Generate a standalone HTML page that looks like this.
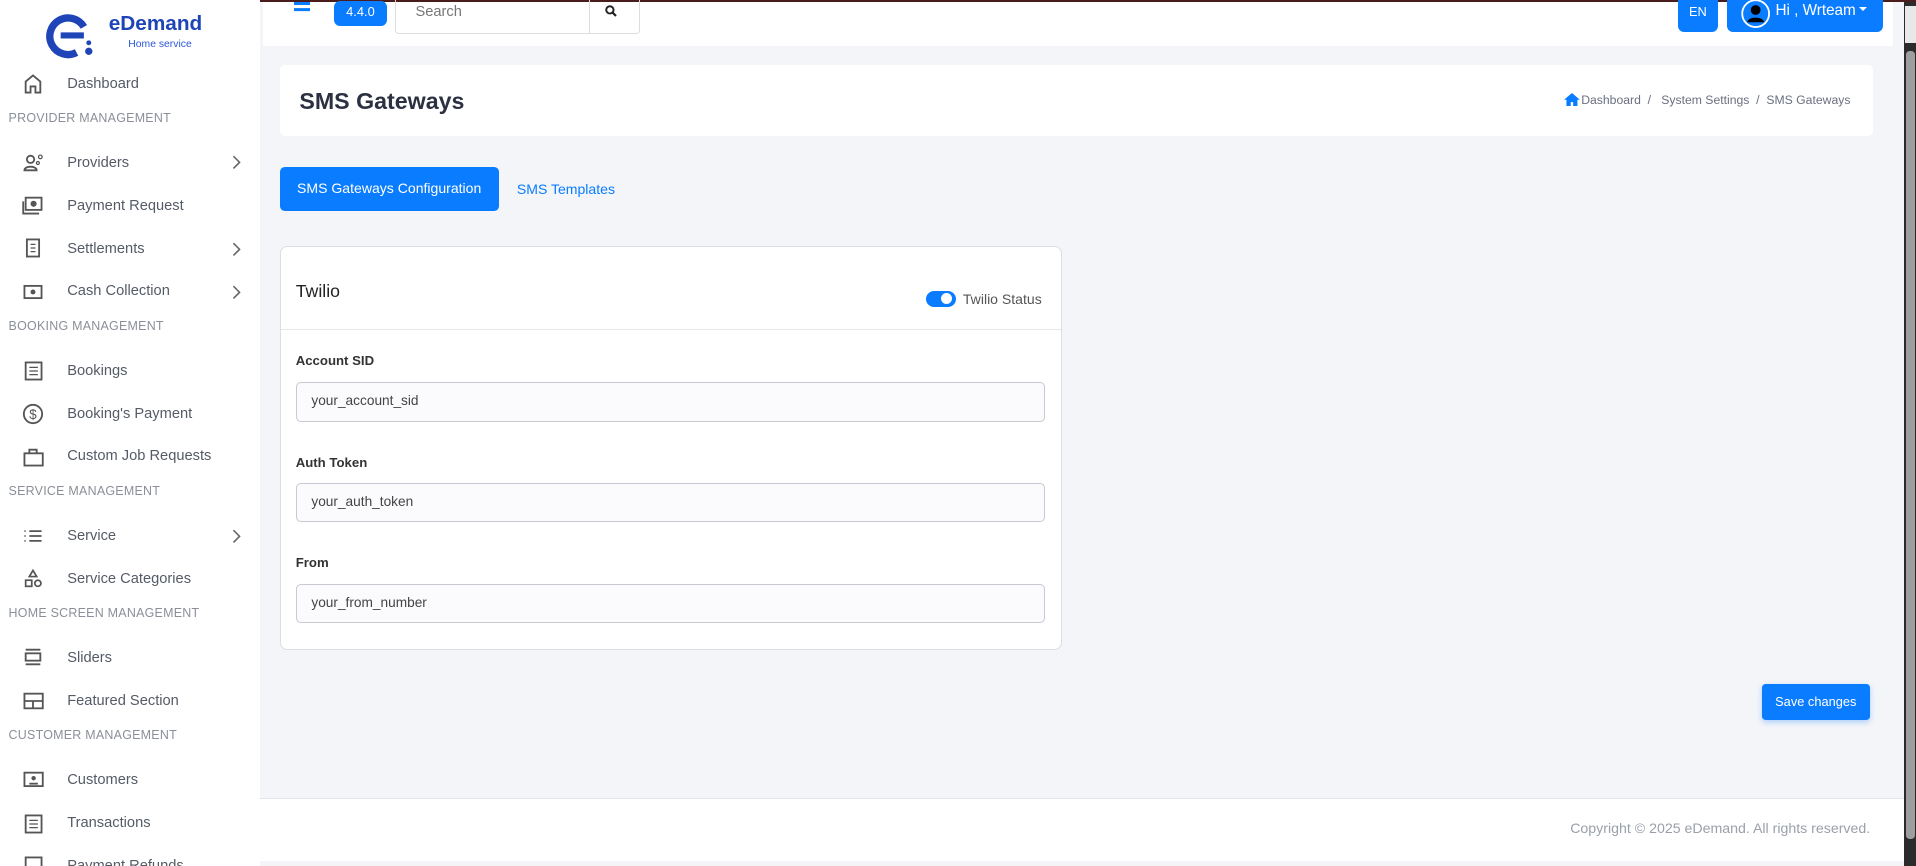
<!DOCTYPE html>
<html><head><meta charset="utf-8"><style>
html,body{margin:0;padding:0;width:1916px;height:866px;overflow:hidden;background:#f4f5f9}
#w{zoom:1.22194;width:1568px;height:709px;position:relative;font-family:"Liberation Sans",sans-serif;background:#f4f5f9;overflow:hidden}
.a{position:absolute}
.side{left:0;top:0;width:213px;height:709px;background:#fff}
.mi{position:absolute;left:55px;font-size:12px;color:#555b66}
.ic{position:absolute;left:18px;width:18px;height:18px}
.sec{position:absolute;left:7px;font-size:10.2px;color:#8a8f98;letter-spacing:.2px}
.chev{position:absolute;left:189px;width:8px;height:12px}
.lbl{position:absolute;left:242px;font-size:10.8px;color:#333;font-weight:bold}
.inp{position:absolute;left:242px;width:613px;height:32px;border:1px solid #c7cad1;border-radius:4px;background:#fbfbfe;font-size:11.2px;color:#444;box-sizing:border-box;padding:0 12px;line-height:30px}
</style></head><body><div id="w">
<div class="a" style="left:0;top:0;width:1568px;height:2px;background:#4a1c1c"></div>
<div class="a side"></div>
<!-- logo -->
<svg class="a" style="left:38px;top:9px" width="40" height="40" viewBox="0 0 40 40"><path d="M31 13 A15 15 0 1 0 25 34" fill="none" stroke="#1e44b8" stroke-width="6"/><path d="M12 20h19" stroke="#1e44b8" stroke-width="5"/><circle cx="35" cy="33" r="3" fill="#1e44b8"/><circle cx="35" cy="26" r="2" fill="#1e44b8"/></svg>
<div class="a" style="left:89px;top:10px;font-size:17px;font-weight:bold;color:#1e44b8">eDemand</div>
<div class="a" style="left:105px;top:32px;font-size:8.5px;color:#2a56d6">Home service</div>
<svg class="ic" style="top:60px" viewBox="0 0 18 18"><path d="M3 16V7l6-5 6 5v9h-4v-5H7v5z" fill="none" stroke="#555" stroke-width="1.5"/></svg>
<div class="mi" style="top:62px">Dashboard</div>
<div class="sec" style="top:91px">PROVIDER MANAGEMENT</div>
<svg class="ic" style="top:124px" viewBox="0 0 18 18"><circle cx="7" cy="6" r="3" fill="none" stroke="#555" stroke-width="1.5"/><path d="M2 15c0-4 10-4 10 0z" fill="none" stroke="#555" stroke-width="1.5"/><circle cx="15" cy="4" r="1.5" fill="none" stroke="#555"/><circle cx="13" cy="9" r="1.2" fill="none" stroke="#555"/></svg>
<div class="mi" style="top:127px">Providers</div>
<svg class="chev" style="top:127px" viewBox="0 0 8 12"><path d="M2 1l5 5-5 5" fill="none" stroke="#666" stroke-width="1.3"/></svg>
<svg class="ic" style="top:159px" viewBox="0 0 18 18"><rect x="3" y="3" width="13" height="10" fill="none" stroke="#555" stroke-width="1.5"/><circle cx="9.5" cy="8" r="2.5" fill="#555"/><path d="M1 6v10h13" fill="none" stroke="#555" stroke-width="1.5"/></svg>
<div class="mi" style="top:162px">Payment Request</div>
<svg class="ic" style="top:194px" viewBox="0 0 18 18"><rect x="4" y="2" width="10" height="14" fill="none" stroke="#555" stroke-width="1.5"/><path d="M7 6h4M7 9h4M7 12h4" stroke="#555"/></svg>
<div class="mi" style="top:197px">Settlements</div>
<svg class="chev" style="top:198px" viewBox="0 0 8 12"><path d="M2 1l5 5-5 5" fill="none" stroke="#666" stroke-width="1.3"/></svg>
<svg class="ic" style="top:230px" viewBox="0 0 18 18"><rect x="2" y="4" width="14" height="10" fill="none" stroke="#555" stroke-width="1.5"/><circle cx="9" cy="9" r="2" fill="#555"/></svg>
<div class="mi" style="top:232px">Cash Collection</div>
<svg class="chev" style="top:233px" viewBox="0 0 8 12"><path d="M2 1l5 5-5 5" fill="none" stroke="#666" stroke-width="1.3"/></svg>
<div class="sec" style="top:261px">BOOKING MANAGEMENT</div>
<svg class="ic" style="top:295px" viewBox="0 0 18 18"><rect x="3" y="2" width="13" height="14" fill="none" stroke="#555" stroke-width="1.5"/><path d="M6 6h7M6 9h7M6 12h7" stroke="#555"/></svg>
<div class="mi" style="top:297px">Bookings</div>
<svg class="ic" style="top:330px" viewBox="0 0 18 18"><circle cx="9" cy="9" r="7.5" fill="none" stroke="#555" stroke-width="1.5"/><text x="9" y="13" font-size="11" text-anchor="middle" fill="#555" font-family="Liberation Sans">$</text></svg>
<div class="mi" style="top:332px">Booking's Payment</div>
<svg class="ic" style="top:365px" viewBox="0 0 18 18"><rect x="2" y="6" width="15" height="10" fill="none" stroke="#555" stroke-width="1.5"/><path d="M6 6V3h6v3" fill="none" stroke="#555" stroke-width="1.5"/></svg>
<div class="mi" style="top:367px">Custom Job Requests</div>
<div class="sec" style="top:396px">SERVICE MANAGEMENT</div>
<svg class="ic" style="top:430px" viewBox="0 0 18 18"><path d="M2 5h1M6 5h10M2 9h1M6 9h10M2 13h1M6 13h10" stroke="#555" stroke-width="1.5"/></svg>
<div class="mi" style="top:432px">Service</div>
<svg class="chev" style="top:433px" viewBox="0 0 8 12"><path d="M2 1l5 5-5 5" fill="none" stroke="#666" stroke-width="1.3"/></svg>
<svg class="ic" style="top:465px" viewBox="0 0 18 18"><path d="M9 2l3 5H6z" fill="none" stroke="#555" stroke-width="1.4"/><rect x="3" y="10" width="5" height="5" fill="none" stroke="#555" stroke-width="1.4"/><circle cx="13" cy="12.5" r="2.5" fill="none" stroke="#555" stroke-width="1.4"/></svg>
<div class="mi" style="top:467px">Service Categories</div>
<div class="sec" style="top:496px">HOME SCREEN MANAGEMENT</div>
<svg class="ic" style="top:529px" viewBox="0 0 18 18"><path d="M3 3h12M3 15h12" stroke="#555" stroke-width="1.5"/><rect x="3" y="6" width="12" height="6" fill="none" stroke="#555" stroke-width="1.5"/></svg>
<div class="mi" style="top:532px">Sliders</div>
<svg class="ic" style="top:565px" viewBox="0 0 18 18"><rect x="2" y="3" width="15" height="12" fill="none" stroke="#555" stroke-width="1.5"/><path d="M2 9h15M9 9v6" stroke="#555" stroke-width="1.5"/></svg>
<div class="mi" style="top:567px">Featured Section</div>
<div class="sec" style="top:596px">CUSTOMER MANAGEMENT</div>
<svg class="ic" style="top:629px" viewBox="0 0 18 18"><rect x="2" y="3" width="15" height="11" fill="none" stroke="#555" stroke-width="1.5"/><circle cx="9.5" cy="7.5" r="1.8" fill="#555"/><path d="M6 12h7" stroke="#555" stroke-width="1.5"/></svg>
<div class="mi" style="top:632px">Customers</div>
<svg class="ic" style="top:665px" viewBox="0 0 18 18"><rect x="3" y="2" width="13" height="14" fill="none" stroke="#555" stroke-width="1.5"/><path d="M6 6h7M6 9h7M6 12h7" stroke="#555"/></svg>
<div class="mi" style="top:667px">Transactions</div>
<svg class="ic" style="top:700px" viewBox="0 0 18 18"><rect x="3" y="2" width="13" height="14" fill="none" stroke="#555" stroke-width="1.5"/></svg>
<div class="mi" style="top:702px">Payment Refunds</div>
<!-- topbar -->
<div class="a" style="left:215px;top:2px;width:1334px;height:36px;background:#fff"></div>
<div class="a" style="left:241px;top:2px;width:13px;height:2px;background:#0a7cff;box-shadow:0 5px 0 #0a7cff"></div>
<div class="a" style="left:273px;top:1px;width:44px;height:20px;background:#0a7cff;border-radius:5px;color:#fff;font-size:10.5px;text-align:center;line-height:18px">4.4.0</div>
<div class="a" style="left:323px;top:0;width:201px;height:28px;border:1px solid #ddd;border-top:none;border-radius:0 0 3px 3px;box-sizing:border-box"></div>
<div class="a" style="left:482px;top:0;width:1px;height:28px;background:#ddd"></div>
<div class="a" style="left:340px;top:3px;font-size:12px;color:#777">Search</div>
<svg class="a" style="left:495px;top:4px" width="10" height="10" viewBox="0 0 10 10"><circle cx="4" cy="4" r="3" fill="none" stroke="#222" stroke-width="1.6"/><path d="M6 6l3 3" stroke="#222" stroke-width="1.8"/></svg>
<div class="a" style="left:1373px;top:0;width:33px;height:26px;background:#0a7cff;border-radius:0 0 5px 5px;color:#fff;font-size:10.5px;text-align:center;line-height:20px">EN</div>
<div class="a" style="left:1413px;top:0;width:128px;height:26px;background:#0a7cff;border-radius:0 0 5px 5px"></div>
<svg class="a" style="left:1425px;top:-1px" width="24" height="24" viewBox="0 0 24 24"><circle cx="12" cy="12" r="11" fill="none" stroke="#fff" stroke-width="1.5"/><circle cx="12" cy="9" r="4" fill="#000"/><path d="M5 19c1-5 13-5 14 0z" fill="#000"/></svg>
<div class="a" style="left:1453px;top:2px;font-size:12.5px;color:#fff">Hi , Wrteam</div>
<div class="a" style="left:1521px;top:6px;width:0;height:0;border:4px solid transparent;border-top:4px solid #fff"></div>
<!-- header card -->
<div class="a" style="left:229px;top:53px;width:1304px;height:58px;background:#fff;border-radius:4px"></div>
<div class="a" style="left:245px;top:72px;font-size:19px;font-weight:bold;color:#2c3142">SMS Gateways</div>
<svg class="a" style="left:1280px;top:76px" width="13" height="11" viewBox="0 0 13 11"><path d="M6.5 0L0 5.5h2V11h3.5V7.5h2V11H11V5.5h2z" fill="#0a7cff"/></svg>
<div class="a" style="left:1294px;top:76px;font-size:10px;color:#6b7080">Dashboard &nbsp;/ &nbsp; System Settings &nbsp;/ &nbsp;SMS Gateways</div>
<!-- tabs -->
<div class="a" style="left:229px;top:137px;width:179px;height:36px;background:#0a7cff;border-radius:4px;color:#fff;font-size:11.5px;text-align:center;line-height:36px">SMS Gateways Configuration</div>
<div class="a" style="left:423px;top:148px;font-size:11.5px;color:#0a7cff">SMS Templates</div>
<!-- card -->
<div class="a" style="left:229px;top:201px;width:640px;height:331px;background:#fff;border:1px solid #dcdee3;border-radius:6px;box-sizing:border-box"></div>
<div class="a" style="left:230px;top:269px;width:638px;height:1px;background:#e5e7eb"></div>
<div class="a" style="left:242px;top:230px;font-size:14.5px;color:#222">Twilio</div>
<div class="a" style="left:758px;top:238px;width:24px;height:13px;background:#0a7cff;border-radius:7px"></div>
<div class="a" style="left:770px;top:240px;width:9px;height:9px;background:#fff;border-radius:50%"></div>
<div class="a" style="left:788px;top:238px;font-size:11.5px;color:#555">Twilio Status</div>
<div class="lbl" style="top:289px">Account SID</div>
<div class="inp" style="top:313px">your_account_sid</div>
<div class="lbl" style="top:372px">Auth Token</div>
<div class="inp" style="top:395px">your_auth_token</div>
<div class="lbl" style="top:454px">From</div>
<div class="inp" style="top:478px">your_from_number</div>
<div class="a" style="left:1442px;top:560px;width:88px;height:29px;background:#0a7cff;border-radius:3px;color:#fff;font-size:10.5px;text-align:center;line-height:29px;box-shadow:0 2px 5px rgba(10,124,255,.3)">Save changes</div>
<!-- footer -->
<div class="a" style="left:213px;top:653px;width:1345px;height:51px;background:#fff;border-top:1px solid #e3e5ea"></div>
<div class="a" style="left:1285px;top:672px;font-size:11.6px;color:#9aa0aa">Copyright © 2025 eDemand. All rights reserved.</div>
<!-- scrollbar -->
<div class="a" style="left:1558px;top:2px;width:10px;height:707px;background:#2b2b2b"></div>
<div class="a" style="left:1559px;top:5px;width:9px;height:30px;background:#e8e8e8"></div>
<div class="a" style="left:1560px;top:42px;width:7px;height:645px;background:#9e9e9e;border-radius:3px"></div>
</div></body></html>
